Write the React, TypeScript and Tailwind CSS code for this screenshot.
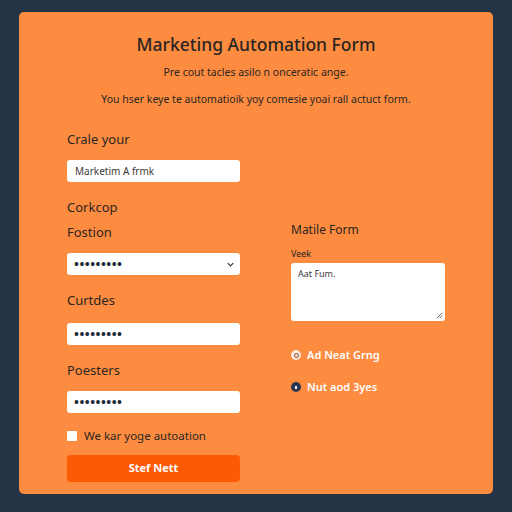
import React from 'react';

const Dots = () => (
  <span className="text-[13px] font-bold leading-none tracking-[0.5px] text-[#1f2a3a]">•••••••••</span>
);

export default function App() {
  return (
    <div className="min-h-[512px] w-[512px] bg-[#243447] pt-[12px] font-['Noto_Sans',sans-serif]">
      <div className="mx-[19px] h-[482px] rounded-[5px] bg-[#fd8b40] pt-[19px]">
        {/* Header */}
        <h1 className="text-center text-[17.5px] font-medium leading-[26px] text-[#2b2622]">Marketing Automation Form</h1>
        <p className="mt-[8px] text-center text-[10.5px] leading-[14px] text-[#2b2622]">
          Pre cout tacles asilo n onceratic ange.
        </p>
        <p className="mt-[13px] text-center text-[10.5px] leading-[14px] text-[#2b2622]">
          You hser keye te automatioik yoy comesie yoai rall actuct form.
        </p>

        <div className="mt-[23px] flex gap-[51px] pl-[48px]">
          {/* Left column */}
          <div className="flex w-[173px] flex-col">
            <label className="text-[13px] leading-[20px] text-[#2b2622]">Crale your</label>
            <div className="mt-[11px] flex h-[22px] items-center rounded-[3px] bg-white px-[8px] text-[10px] text-[#3a3a3a]">
              Marketim A frmk
            </div>

            <div className="mt-[15px] text-[13px] leading-[20px] text-[#2b2622]">Corkcop</div>
            <label className="mt-[5px] text-[13px] leading-[20px] text-[#2b2622]">Fostion</label>
            <div className="mt-[11px] flex h-[22px] items-center justify-between rounded-[3px] bg-white pl-[7px] pr-[5px]">
              <Dots />
              <svg width="9" height="9" viewBox="0 0 10 10" fill="none" stroke="#2b3a4a" strokeWidth="1.4">
                <path d="M2 3.5l3 3 3-3" />
              </svg>
            </div>

            <label className="mt-[15px] text-[13px] leading-[20px] text-[#2b2622]">Curtdes</label>
            <div className="mt-[13px] flex h-[22px] items-center rounded-[3px] bg-white px-[7px]">
              <Dots />
            </div>

            <label className="mt-[15px] text-[13px] leading-[20px] text-[#2b2622]">Poesters</label>
            <div className="mt-[11px] flex h-[22px] items-center rounded-[3px] bg-white px-[7px]">
              <Dots />
            </div>

            <div className="mt-[13px] flex h-[20px] items-center gap-[7px]">
              <span className="h-[10px] w-[10px] rounded-[1px] bg-white" />
              <span className="text-[11.5px] text-[#2b2622]">We kar yoge autoation</span>
            </div>

            <button className="mt-[9px] h-[27px] rounded-[4px] bg-[#fc5a06] text-[11px] font-bold text-white">
              Stef Nett
            </button>
          </div>

          {/* Right column */}
          <div className="flex w-[154px] flex-col pt-[92px]">
            <div className="text-[12px] leading-[18px] text-[#2b2622]">Matile Form</div>
            <div className="mt-[9px] text-[9px] leading-[12px] text-[#2b2622]">Veek</div>
            <div className="relative mt-[3px] h-[58px] rounded-[3px] bg-white px-[7px] pt-[4px] text-[9px] text-[#3a3a3a]">
              Aat Fum.
              <svg className="absolute bottom-[2px] right-[2px]" width="7" height="7" viewBox="0 0 8 8" stroke="#555" strokeWidth="1">
                <path d="M1 7L7 1M4 7l3-3" />
              </svg>
            </div>

            <div className="mt-[26px] flex h-[16px] items-center gap-[6px]">
              <span className="flex h-[10px] w-[10px] items-center justify-center rounded-full bg-[#fbe9dc]">
                <span className="h-[5px] w-[5px] rounded-full border border-[#8a4a2a]" />
              </span>
              <span className="text-[11px] font-semibold text-white">Ad Neat Grng</span>
            </div>
            <div className="mt-[16px] flex h-[16px] items-center gap-[6px]">
              <span className="flex h-[10px] w-[10px] items-center justify-center rounded-full bg-[#2b3550]">
                <span className="h-[3px] w-[1.5px] bg-white" />
              </span>
              <span className="text-[11px] font-semibold text-white">Nut aod 3yes</span>
            </div>
          </div>
        </div>
      </div>
    </div>
  );
}
